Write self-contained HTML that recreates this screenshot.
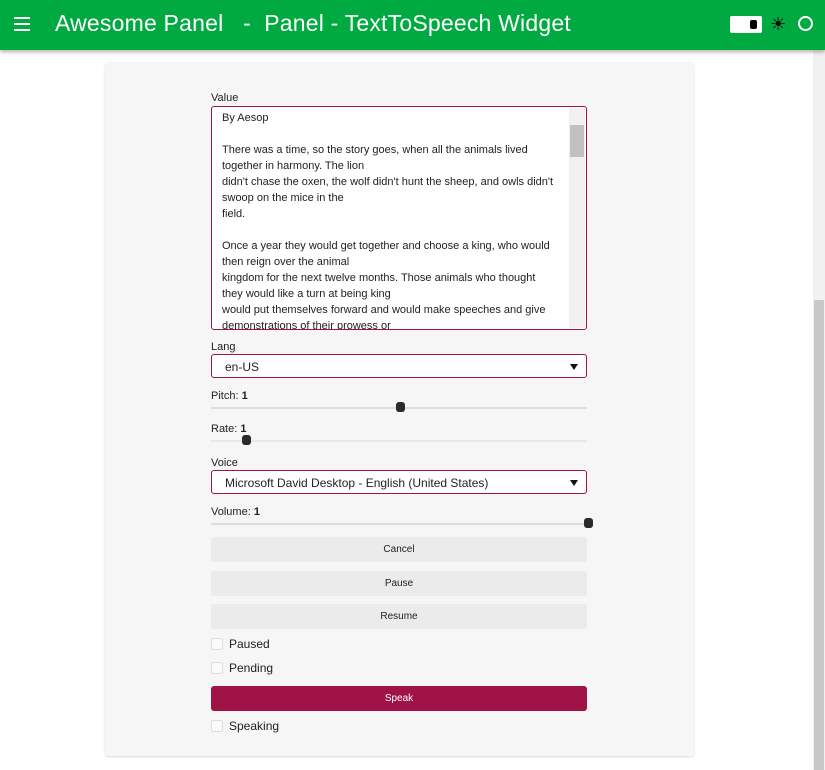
<!DOCTYPE html>
<html><head><style>
*{box-sizing:border-box;margin:0;padding:0}
body{width:825px;height:770px;overflow:hidden;background:#fff;font-family:"Liberation Sans",sans-serif;font-size:11px;color:#222;position:relative}
.hdr{position:absolute;left:0;top:0;width:825px;height:50px;background:#00aa41;box-shadow:0 2px 4px rgba(0,0,0,.3);z-index:2}
.hdr .t{position:absolute;left:55px;top:10px;color:#fff;font-size:23px;white-space:pre;letter-spacing:0.2px}
.ham{position:absolute;left:14px;top:17px;width:16px}
.ham i{display:block;height:2px;background:#fff;margin-bottom:4px}
.card{position:absolute;left:105px;top:62px;width:589px;height:694px;background:#f6f6f6;border-radius:3px;box-shadow:0 1px 2px rgba(0,0,0,.15)}
.sb{position:absolute;left:813px;top:50px;width:12px;height:720px;background:#f1f1f1}
.sb .th{position:absolute;left:1px;top:250px;width:10px;height:470px;background:#c8c8c8}
.a{position:absolute;left:211px;width:376px}
.lbl{position:absolute;left:211px;font-size:11px}
.ta{top:106px;height:224px;border:1px solid #a01346;border-radius:3px;background:#fff;overflow:hidden;padding:3px 30px 0 10px;font-size:11px;line-height:16px}
.ta .s{position:absolute;right:1px;top:1px;width:16px;height:220px;background:#f1f1f1}
.ta .s b{position:absolute;left:1px;top:17px;width:14px;height:32px;background:#c1c1c1}
.sel{height:24px;border:1px solid #a01346;border-radius:3px;background:#fff;padding:5px 0 0 13px;font-size:12px}
.sel:after{content:"";position:absolute;right:8px;top:9px;border:4px solid transparent;border-top:6px solid #111}
.track{height:2px;background:#ddd}
.knob{position:absolute;width:9px;height:10px;background:#2a2a2a;border-radius:3px}
.btn{height:25px;background:#ebebeb;border-radius:3px;text-align:center;line-height:25px;font-size:10px}
.cb{position:absolute;left:211px;font-size:12px}
.cb i{display:inline-block;width:12px;height:12px;border:1px solid #ddd;background:#fafafa;border-radius:2px;vertical-align:-2px;margin-right:6px}
</style></head><body>
<div class="hdr"><div class="ham"><i></i><i></i><i></i></div>
<div class="t">Awesome Panel   -  Panel - TextToSpeech Widget</div>
<div style="position:absolute;left:730px;top:16px;width:32px;height:17px;background:#fff;border-radius:2px"><div style="position:absolute;right:5px;top:4px;width:7px;height:9px;background:#000;border-radius:2px"></div></div>
<div style="position:absolute;left:770px;top:14px;color:#000;font-size:18px">☀</div>
<div style="position:absolute;left:798px;top:16px;width:15px;height:15px;border:2px solid #fff;border-radius:50%"></div>
</div>
<div class="sb"><div class="th"></div></div>
<div class="card"></div>
<div class="lbl" style="top:92px">Value</div>
<div class="a ta">By Aesop<br><br>There was a time, so the story goes, when all the animals lived together in harmony. The lion<br>didn't chase the oxen, the wolf didn't hunt the sheep, and owls didn't swoop on the mice in the<br>field.<br><br>Once a year they would get together and choose a king, who would then reign over the animal<br>kingdom for the next twelve months. Those animals who thought they would like a turn at being king<br>would put themselves forward and would make speeches and give demonstrations of their prowess or<div class="s"><b></b></div></div>
<div class="lbl" style="top:341px">Lang</div>
<div class="a sel" style="top:354px">en-US</div>
<div class="lbl" style="top:390px">Pitch: <b>1</b></div>
<div class="a track" style="top:407px"></div><div class="knob" style="left:396px;top:402px"></div>
<div class="lbl" style="top:423px">Rate: <b>1</b></div>
<div class="a track" style="top:440px;background:#e8e8e8"></div><div class="knob" style="left:242px;top:435px"></div>
<div class="lbl" style="top:457px">Voice</div>
<div class="a sel" style="top:470px">Microsoft David Desktop - English (United States)</div>
<div class="lbl" style="top:506px">Volume: <b>1</b></div>
<div class="a track" style="top:523px"></div><div class="knob" style="left:584px;top:518px"></div>
<div class="a btn" style="top:537px">Cancel</div>
<div class="a btn" style="top:571px">Pause</div>
<div class="a btn" style="top:604px">Resume</div>
<div class="cb" style="top:637px"><i></i>Paused</div>
<div class="cb" style="top:661px"><i></i>Pending</div>
<div class="a btn" style="top:686px;background:#a01346;color:#fff">Speak</div>
<div class="cb" style="top:719px"><i></i>Speaking</div>
</body></html>
